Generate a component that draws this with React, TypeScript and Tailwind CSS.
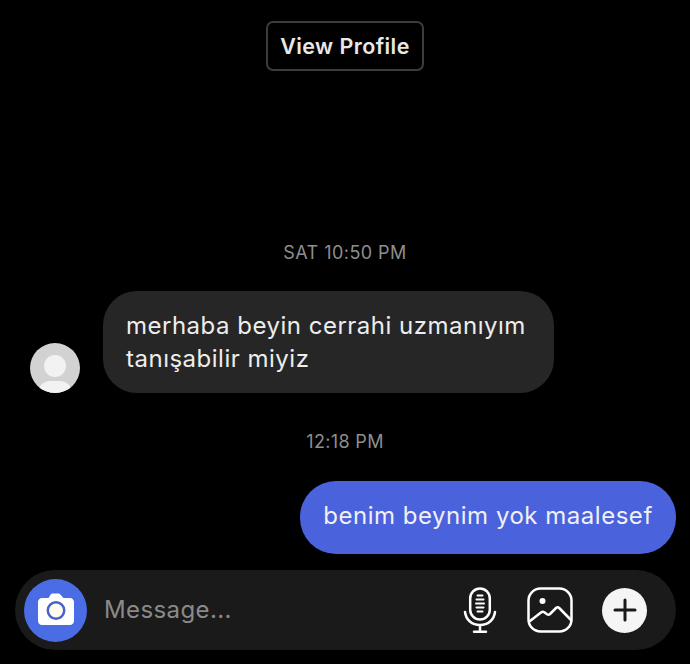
export default function App() {
  return (
    <div className="flex h-[664px] w-[690px] flex-col overflow-hidden bg-black font-['Inter','Liberation_Sans',sans-serif] text-white">
      <div className="flex justify-center pt-[21px]">
        <div className="flex h-[50px] w-[158px] items-center justify-center rounded-[7px] border-2 border-[#3c3c3c] text-[21.5px] font-semibold tracking-[0.42px] text-[#e8e8e8]">
          View Profile
        </div>
      </div>
      <div className="mt-[169px] text-center text-[18px] leading-[26px] tracking-[0.45px] text-[#8e8e8e]">SAT 10:50 PM</div>
      <div className="mt-[25px] flex items-end pl-[30px]">
        <div className="relative h-[50px] w-[50px] overflow-hidden rounded-full bg-[#d2d2d2]">
          <div className="absolute left-[14px] top-[12px] h-[22px] w-[22px] rounded-full bg-[#f2f2f2]" />
          <div className="absolute left-[8px] top-[38px] h-[24px] w-[34px] rounded-full bg-[#f2f2f2]" />
        </div>
        <div className="ml-[23px] flex h-[102px] w-[451px] items-center rounded-[34px] bg-[#262626] pl-[23px] text-[24px] leading-[33px] tracking-[0.5px] text-[#ededed]">
          <div>
            merhaba beyin cerrahi uzmanıyım
            <br />
            tanışabilir miyiz
          </div>
        </div>
      </div>
      <div className="mt-[36px] text-center text-[18px] leading-[26px] tracking-[0.35px] text-[#8e8e8e]">12:18 PM</div>
      <div className="mt-[26px] flex justify-end pr-[14px]">
        <div className="flex h-[73px] w-[376px] items-center justify-center rounded-[36px] bg-[#4a62dc] pb-[3px] text-[24px] tracking-[0.52px] text-[#f0f0f5]">
          benim beynim yok maalesef
        </div>
      </div>
      <div className="ml-[15px] mt-[16px] flex h-[80px] w-[661px] items-center rounded-[40px] bg-[#1a1a1a] pl-[9px]">
        <div className="flex h-[63px] w-[63px] items-center justify-center rounded-full bg-[#4a6de5]">
          <svg width="38" height="34" viewBox="0 0 38 34">
            <path
              d="M5 5h6.500l2.200-3.600c.4-.6 1-.9 1.700-.9h6.200c.7 0 1.300.3 1.700.9L26.500 5H33c2.200 0 4 1.800 4 4v19c0 2.200-1.800 4-4 4H5c-2.200 0-4-1.800-4-4V9c0-2.200 1.800-4 4-4z"
              fill="#fff"
            />
            <circle cx="19" cy="17.500" r="8.200" fill="#fffdf0" stroke="#4a62c8" strokeWidth="2.500" />
          </svg>
        </div>
        <div className="ml-[17px] flex-1 text-[24px] tracking-[0.4px] text-[#8a8a8a]">Message...</div>
        <svg width="34" height="46" viewBox="0 0 34 46" fill="none" stroke="#fff" strokeLinecap="round">
          <rect x="7.200" y="1.500" width="19.600" height="31" rx="9.800" strokeWidth="2.500" />
          <path d="M14.500 8.500h5M13.500 12.500h7M13 16.500h8M13.500 20.500h7M14.500 24.500h5" strokeWidth="2" />
          <path d="M2 25c1 8 7 13 15 13s14-5 15-13M17 38v6.500M11 44.700h12" strokeWidth="2.500" />
        </svg>
        <svg className="ml-[30px]" width="46" height="46" viewBox="0 0 46 46" fill="none" stroke="#fff" strokeWidth="2.500" strokeLinejoin="round" strokeLinecap="round">
          <rect x="1.500" y="1.500" width="43" height="43" rx="12" />
          <circle cx="15.500" cy="14" r="3" fill="#fff" stroke="none" />
          <path d="M3 34l11-8.500c1.200-.9 2.200-.9 3.300-.2l2.700 1.900c1.100.7 2.100.6 3-.2l6-6c1.100-1 2.200-1 3.200 0L44 33" />
        </svg>
        <div className="ml-[29px] mr-[29px] flex h-[45px] w-[45px] items-center justify-center rounded-full bg-[#f5f5f5]">
          <svg width="24" height="24" viewBox="0 0 24 24" fill="none" stroke="#1a1a1a" strokeWidth="3" strokeLinecap="round">
            <path d="M12 2v20M2 12h20" />
          </svg>
        </div>
      </div>
    </div>
  );
}
